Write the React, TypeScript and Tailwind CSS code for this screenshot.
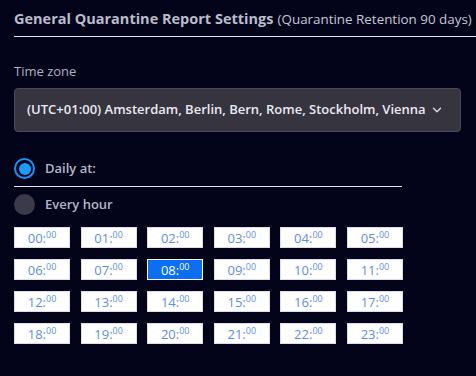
import React from "react";
import { ChevronDown } from "lucide-react";

const hours = Array.from({ length: 24 }, (_, i) => String(i).padStart(2, "0"));

const TimeButton = ({ hour, selected }: { hour: string; selected: boolean }) => {
	return (
		<button
			className={
				selected
					? "h-[21px] w-[56px] border border-white bg-[#0a6ff5] text-white flex items-center justify-center leading-none"
					: "h-[21px] w-[56px] border border-[#dcdcf0] bg-white text-[#5d8bef] flex items-center justify-center leading-none"
			}
		>
			<span className="text-[13px] mt-[1px]">{hour}:</span>
			<span className="text-[9px] -mt-[6px]">00</span>
		</button>
	);
};

export default function App() {
	return (
		<div
			className="w-[476px] h-[376px] bg-[#03031a] overflow-hidden pl-[14px]"
			style={{ fontFamily: '"Open Sans", "Noto Sans", sans-serif' }}
		>
			<div className="pt-[6px] pb-[6px] border-b border-[#e6e6ee] whitespace-nowrap">
				<span className="text-[14.5px] font-bold text-[#b9bdcb]">
					General Quarantine Report Settings
				</span>{" "}
				<span className="text-[13.4px] text-[#c4c8d6]">(Quarantine Retention 90 days)</span>
			</div>

			<div className="mt-[28px] text-[13px] text-[#aeb2c2] leading-none">Time zone</div>

			<div className="mt-[10px] mr-[15px] h-[44px] rounded border border-[#4b4a5c] bg-[#35343f] flex items-center justify-between pl-[12px] pr-[16px]">
				<span className="text-[13px] font-semibold text-[#eceaf2] whitespace-nowrap">
					(UTC+01:00) Amsterdam, Berlin, Bern, Rome, Stockholm, Vienna
				</span>
				<ChevronDown size={14} strokeWidth={2.5} className="text-[#d8d8e2]" />
			</div>

			<div className="mt-[26px] w-[388px] border-b border-[#e6e6ee] pb-[7px] flex items-center gap-[10px]">
				<span className="w-[21px] h-[21px] rounded-full border-2 border-[#1d8ff2] flex items-center justify-center">
					<span className="w-[12px] h-[12px] rounded-full bg-[#1a9bff]" />
				</span>
				<span className="text-[13px] font-semibold text-[#b3b7c9]">Daily at:</span>
			</div>

			<div className="mt-[7px] flex items-center gap-[10px]">
				<span className="w-[21px] h-[21px] rounded-full bg-[#3b3a4b]" />
				<span className="text-[13px] font-semibold text-[#b3b7c9]">Every hour</span>
			</div>

			<div className="mt-[12px] grid grid-cols-[repeat(6,56px)] gap-x-[10.6px] gap-y-[11px]">
				{hours.map((h) => (
					<TimeButton key={h} hour={h} selected={h === "08"} />
				))}
			</div>
		</div>
	);
}
